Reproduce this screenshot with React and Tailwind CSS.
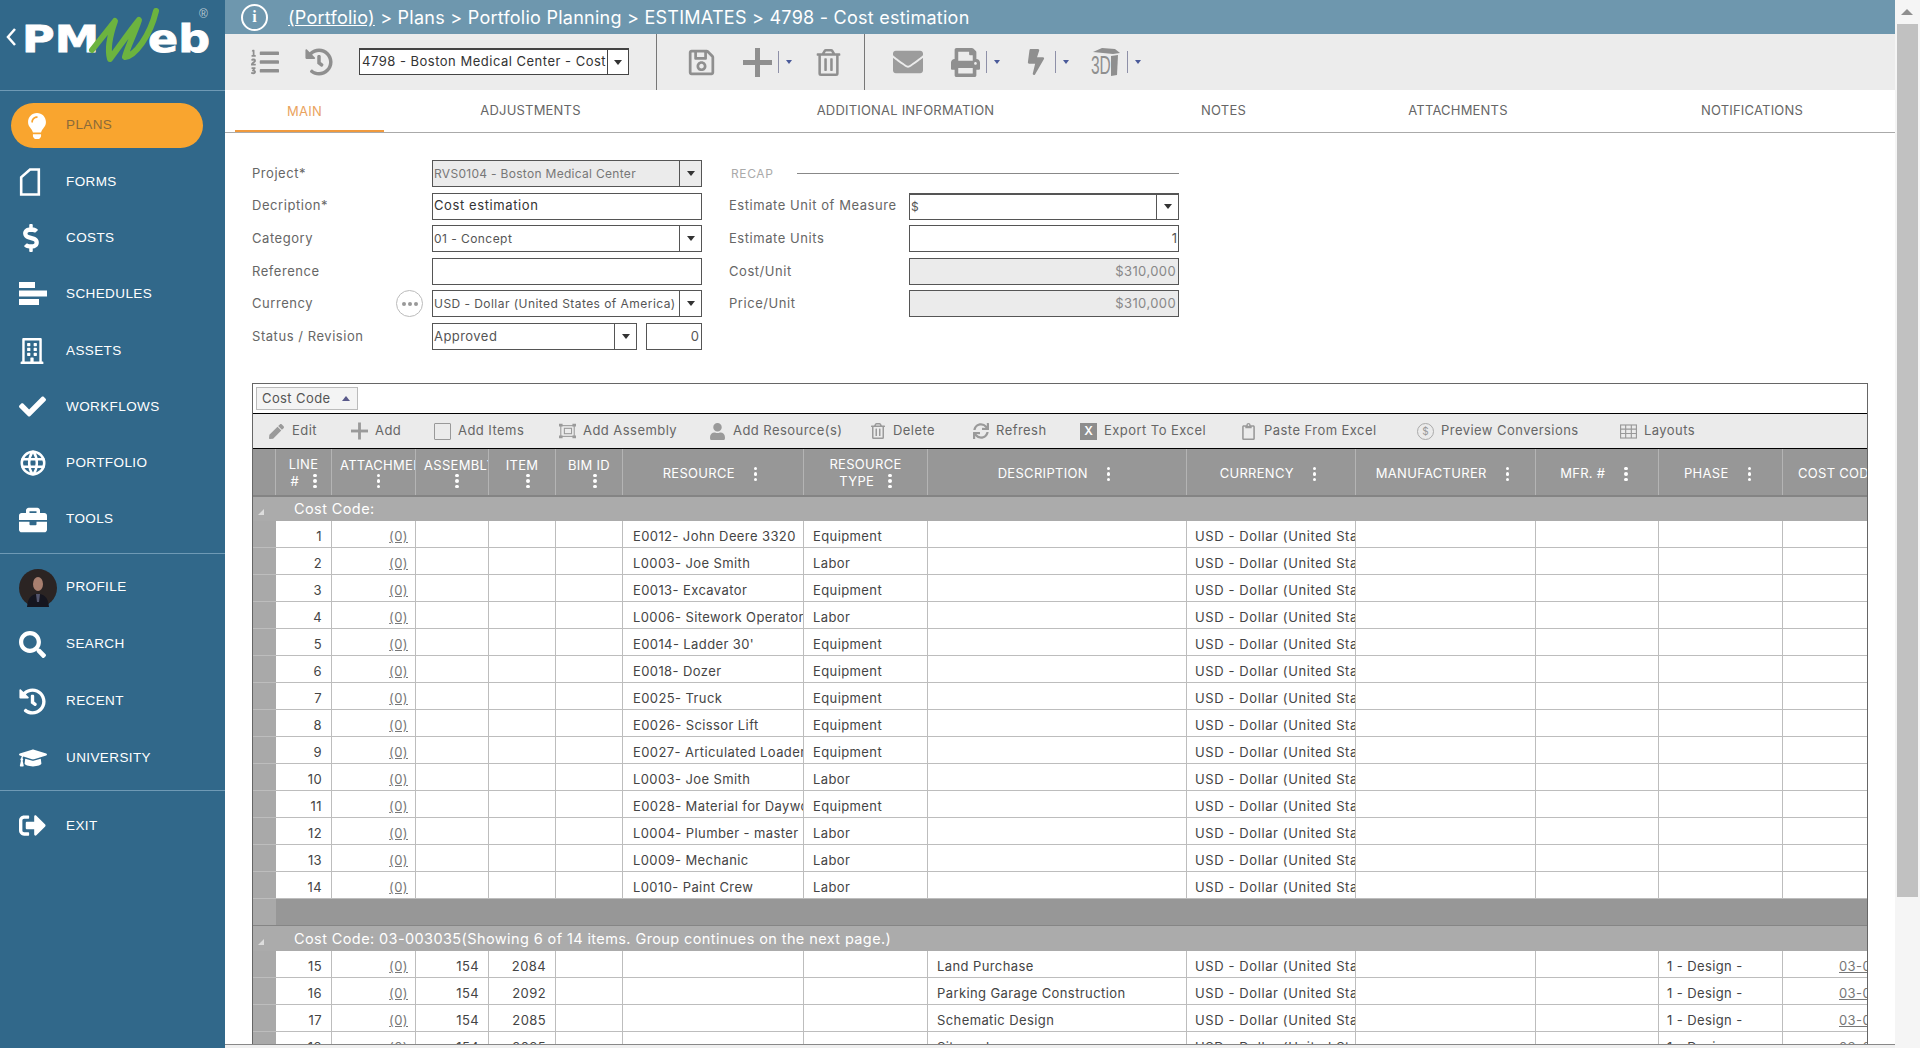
import {
  FaLightbulb, FaDollarSign, FaRegBuilding, FaCheck, FaBriefcase, FaSearch, FaHistory,
  FaGraduationCap, FaListOl, FaRegSave, FaRegTrashAlt, FaEnvelope, FaPrint, FaBolt,
  FaPen, FaUser, FaSync, FaRegClipboard, FaSignOutAlt,
} from "react-icons/fa";
import { TbWorld } from "react-icons/tb";

const font = "font-['Inter','Liberation_Sans',sans-serif]";

function Logo() {
  return (
    <svg width="225" height="90" viewBox="0 0 225 90" className="shrink-0">
      <path d="M15 29 L8 37 L15 45" fill="none" stroke="#fff" strokeWidth="2.5" />
      <text x="22" y="52" fill="#fff" stroke="#fff" strokeWidth="0.8" fontFamily="DejaVu Sans" fontWeight="700" fontSize="37" textLength="77" lengthAdjust="spacingAndGlyphs">PM</text>
      <text x="148" y="52" fill="#fff" stroke="#fff" strokeWidth="0.8" fontFamily="DejaVu Sans" fontWeight="700" fontSize="37" textLength="62" lengthAdjust="spacingAndGlyphs">eb</text>
      <path d="M92 50 C100 40 108 30 115 21 C110 35 107 48 110 59 C119 47 130 31 139 20 C134 35 127 48 125 57 C135 56 150 36 156 11" fill="none" stroke="#6cb33f" strokeWidth="6" strokeLinecap="round" strokeLinejoin="round" />
      <text x="199" y="18" fill="#b9c9d3" fontFamily="Liberation Sans" fontSize="12">®</text>
    </svg>
  );
}

function FormsIcon() {
  return (
    <svg width="22" height="28" viewBox="0 0 20 27" fill="none" stroke="#fff" strokeWidth="2.5">
      <path d="M1.5 25.5 V9 L10 1.5 H18.5 V25.5 Z" />
    </svg>
  );
}

function ScheduleIcon() {
  return (
    <svg width="28" height="24" viewBox="0 0 28 24" fill="#fff">
      <rect x="0" y="0" width="16" height="6" />
      <rect x="0" y="8.5" width="28" height="6" />
      <rect x="0" y="17" width="20" height="6" />
    </svg>
  );
}

function Avatar() {
  return (
    <svg width="38" height="38" viewBox="0 0 38 38">
      <circle cx="19" cy="19" r="19" fill="#2b2423" />
      <ellipse cx="19" cy="15" rx="5" ry="7" fill="#a87f6f" />
      <path d="M8 38 C9 27 14 25 19 25 C24 25 29 27 30 38 Z" fill="#15151f" />
      <path d="M17 25 L21 25 L20 33 L18 33 Z" fill="#54566e" />
    </svg>
  );
}

function NavItem({ icon, label, active }) {
  return (
    <div className={`flex items-center h-[45px] ml-[11px] w-[192px] rounded-full ${active ? "bg-[#f9a52f]" : ""}`}>
      <div className="w-[38px] ml-[8px] flex justify-start shrink-0">{icon}</div>
      <span className={`ml-[9px] text-[13.5px] tracking-[0.4px] font-['Liberation_Sans',sans-serif] ${active ? "text-[#8a6a3a]" : "text-white"}`}>{label}</span>
    </div>
  );
}

function Sidebar() {
  const iconCls = "text-white";
  return (
    <aside className="w-[225px] shrink-0 h-full bg-[#31688a] flex flex-col">
      <Logo />
      <div className="border-t border-[#6f9ab5]" />
      <div className="pt-[12px] flex flex-col gap-[11.3px]">
        <NavItem active label="PLANS" icon={<FaLightbulb size={26} className="text-white ml-[5px]" />} />
        <NavItem label="FORMS" icon={<FormsIcon />} />
        <NavItem label="COSTS" icon={<FaDollarSign size={28} className={`${iconCls} -ml-[2px]`} />} />
        <NavItem label="SCHEDULES" icon={<ScheduleIcon />} />
        <NavItem label="ASSETS" icon={<FaRegBuilding size={26} className={iconCls} />} />
        <NavItem label="WORKFLOWS" icon={<FaCheck size={27} className={iconCls} />} />
        <NavItem label="PORTFOLIO" icon={<TbWorld size={30} className={`${iconCls} -ml-[1px]`} />} />
        <NavItem label="TOOLS" icon={<FaBriefcase size={28} className={iconCls} />} />
      </div>
      <div className="border-t border-[#6f9ab5] mt-[11px]" />
      <div className="pt-[11px] flex flex-col gap-[11.8px]">
        <NavItem label="PROFILE" icon={<Avatar />} />
        <NavItem label="SEARCH" icon={<FaSearch size={27} className={iconCls} />} />
        <NavItem label="RECENT" icon={<FaHistory size={27} className={iconCls} />} />
        <NavItem label="UNIVERSITY" icon={<FaGraduationCap size={28} className={iconCls} />} />
      </div>
      <div className="border-t border-[#6f9ab5] mt-[10px]" />
      <div className="pt-[12px]">
        <NavItem label="EXIT" icon={<FaSignOutAlt size={27} className={iconCls} />} />
      </div>
    </aside>
  );
}

function Caret({ className = "" }) {
  return <span className={`inline-block w-0 h-0 border-l-[4px] border-r-[4px] border-t-[5px] border-l-transparent border-r-transparent border-t-[#333] ${className}`} />;
}

function BlueCaret() {
  return (
    <span className="flex items-center h-[26px] ml-[6px]">
      <span className="w-px h-[22px] bg-[#8e90a8]" />
      <span className="ml-[7px] w-0 h-0 border-l-[3px] border-r-[3px] border-t-[4px] border-l-transparent border-r-transparent border-t-[#4a5a9a]" />
    </span>
  );
}

function ToolIcon({ children, ml }) {
  return <div className={`flex items-center text-[#8f8f8f] ${ml}`}>{children}</div>;
}

function ThreeDIcon() {
  return (
    <div className="relative w-[30px] h-[30px]">
      <span className="absolute left-0 top-[6px] text-[25px] leading-[24px] font-['Liberation_Sans',sans-serif] text-[#8f8f8f] scale-x-[0.62] origin-left">3D</span>
      <svg className="absolute left-0 top-0" width="30" height="30" viewBox="0 0 30 30" fill="#8f8f8f">
        <path d="M2 5 L11 1 L24 2 L29 6 L22 7 Z" />
        <path d="M20 9 L27 8 L26 28 L20 29 Z" />
      </svg>
    </div>
  );
}

function Toolbar() {
  return (
    <div className="h-[56px] bg-[#ececec] flex items-stretch shrink-0">
      <ToolIcon ml="ml-[26px]"><FaListOl size={28} /></ToolIcon>
      <ToolIcon ml="ml-[26px]"><FaHistory size={28} /></ToolIcon>
      <div className="ml-[26px] mt-[14px] w-[270px] h-[27px] bg-white border border-[#444] border-t-2 flex items-center">
        <span className={`flex-1 pl-[2px] text-[13px] tracking-[0.5px] text-[#333] whitespace-nowrap overflow-hidden ${font}`}>4798 - Boston Medical Center - Cost</span>
        <span className="w-[21px] h-full border-l border-[#444] flex items-center justify-center"><Caret /></span>
      </div>
      <div className="ml-[27px] w-px bg-[#777]" />
      <ToolIcon ml="ml-[30px]"><FaRegSave size={29} /></ToolIcon>
      <ToolIcon ml="ml-[27px]">
        <svg width="29" height="29" viewBox="0 0 29 29" fill="#8f8f8f"><rect x="12" y="0" width="5" height="29" /><rect x="0" y="12" width="29" height="5" /></svg>
        <BlueCaret />
      </ToolIcon>
      <ToolIcon ml="ml-[23px]"><FaRegTrashAlt size={27} /></ToolIcon>
      <div className="ml-[22px] w-px bg-[#777]" />
      <ToolIcon ml="ml-[28px]"><FaEnvelope size={30} className="text-[#9c9c9c]" /></ToolIcon>
      <ToolIcon ml="ml-[28px]"><FaPrint size={29} /><BlueCaret /></ToolIcon>
      <ToolIcon ml="ml-[23px]"><FaBolt size={26} /><BlueCaret /></ToolIcon>
      <ToolIcon ml="ml-[22px]"><ThreeDIcon /><BlueCaret /></ToolIcon>
    </div>
  );
}

function Tabs() {
  const rest = [
    ["ADJUSTMENTS", "w-[293px]"],
    ["ADDITIONAL INFORMATION", "w-[457px]"],
    ["NOTES", "w-[179px]"],
    ["ATTACHMENTS", "w-[290px]"],
    ["NOTIFICATIONS", "w-[298px]"],
  ];
  return (
    <div className={`h-[43px] shrink-0 border-b border-[#aaa] flex pl-[10px] text-[13px] tracking-[0.2px] overflow-hidden ${font}`}>
      <div className="w-[149px] shrink-0 h-[43px] border-b-[3px] border-[#f09a3e] text-[#eaa35f] pr-[10px] flex items-center justify-center pt-[3px]">MAIN</div>
      {rest.map(([t, w]) => (
        <div key={t} className={`${w} shrink-0 flex items-center justify-center text-[#666]`}>{t}</div>
      ))}
    </div>
  );
}

function Field({ children, className = "", disabled }) {
  return <div className={`h-[27px] border border-[#555] flex items-center ${disabled ? "bg-[#ebebeb]" : "bg-white"} ${className}`}>{children}</div>;
}

function SelectBox({ text, color = "text-[#555]", disabled, size = "text-[12px] tracking-[0.45px]", className = "w-[270px]", thick }) {
  return (
    <Field disabled={disabled} className={`${className} ${thick ? "border-t-2" : ""}`}>
      <span className={`flex-1 pl-[1px] whitespace-nowrap overflow-hidden ${size} ${color}`}>{text}</span>
      <span className="w-[22px] shrink-0 h-full border-l border-[#555] flex items-center justify-center"><Caret /></span>
    </Field>
  );
}

function FormLabel({ children, w = "w-[180px]" }) {
  return <div className={`${w} shrink-0 text-[13px] tracking-[0.55px] text-[#666]`}>{children}</div>;
}

function MainForm() {
  return (
    <div className={`flex pl-[27px] pt-[27px] h-[250px] shrink-0 ${font}`}>
      <div className="flex flex-col gap-[5.6px] w-[450px] shrink-0">
        <div className="flex items-center">
          <FormLabel>Project*</FormLabel>
          <SelectBox disabled text="RVS0104 - Boston Medical Center" color="text-[#777]" size="text-[12px] tracking-[0.3px]" />
        </div>
        <div className="flex items-center">
          <FormLabel>Decription*</FormLabel>
          <Field className="w-[270px]"><span className="pl-[1px] text-[13px] tracking-[0.6px] text-[#333]">Cost estimation</span></Field>
        </div>
        <div className="flex items-center">
          <FormLabel>Category</FormLabel>
          <SelectBox text="01 - Concept" />
        </div>
        <div className="flex items-center">
          <FormLabel>Reference</FormLabel>
          <Field className="w-[270px]" />
        </div>
        <div className="flex items-center">
          <FormLabel w="w-[144px]">Currency</FormLabel>
          <div className="w-[27px] h-[27px] mr-[9px] rounded-full border border-[#bbb] flex items-center justify-center gap-[2px] shrink-0">
            <span className="w-[4px] h-[4px] rounded-full bg-[#999]" />
            <span className="w-[4px] h-[4px] rounded-full bg-[#999]" />
            <span className="w-[4px] h-[4px] rounded-full bg-[#999]" />
          </div>
          <SelectBox text="USD - Dollar (United States of America)" />
        </div>
        <div className="flex items-center">
          <FormLabel>Status / Revision</FormLabel>
          <SelectBox text="Approved" className="w-[205px]" size="text-[13px] tracking-[0.45px]" />
          <Field className="w-[56px] ml-[9px] justify-end"><span className="pr-[2px] text-[13px] text-[#555]">0</span></Field>
        </div>
      </div>
      <div className="flex flex-col gap-[5.6px] ml-[27px]">
        <div className="h-[27px] flex items-center pl-[2px]">
          <span className="text-[12px] tracking-[0.6px] text-[#aaa]">RECAP</span>
          <span className="ml-[24px] w-[382px] border-t border-[#888]" />
        </div>
        <div className="flex items-center">
          <FormLabel>Estimate Unit of Measure</FormLabel>
          <SelectBox thick text="$" />
        </div>
        <div className="flex items-center">
          <FormLabel>Estimate Units</FormLabel>
          <Field className="w-[270px] justify-end"><span className="pr-[1px] text-[13px] text-[#555]">1</span></Field>
        </div>
        <div className="flex items-center">
          <FormLabel>Cost/Unit</FormLabel>
          <Field disabled className="w-[270px] justify-end"><span className="pr-[2px] text-[13px] tracking-[0.4px] text-[#888]">$310,000</span></Field>
        </div>
        <div className="flex items-center">
          <FormLabel>Price/Unit</FormLabel>
          <Field disabled className="w-[270px] justify-end"><span className="pr-[2px] text-[13px] tracking-[0.4px] text-[#888]">$310,000</span></Field>
        </div>
      </div>
    </div>
  );
}

function GridAction({ icon, label, w }) {
  return (
    <div className={`${w} flex items-center shrink-0 text-[#666]`}>
      <span className="w-[17px] flex justify-center shrink-0 text-[#9a9a9a]">{icon}</span>
      <span className="ml-[7px] text-[13px] tracking-[0.45px] whitespace-nowrap">{label}</span>
    </div>
  );
}

function AssemblyIcon() {
  return (
    <svg width="19" height="16" viewBox="0 0 19 16" fill="none" stroke="#9a9a9a" strokeWidth="1.2">
      <rect x="2" y="2" width="15" height="12" />
      <rect x="6" y="5" width="8" height="6" />
      <path d="M0 0h4v3H0zM15 0h4v3h-4zM0 13h4v3H0zM15 13h4v3h-4z" fill="#9a9a9a" stroke="none" />
    </svg>
  );
}

function ExcelIcon() {
  return <span className="w-[17px] h-[17px] bg-[#8d8d8d] text-white text-[12px] font-semibold flex items-center justify-center">X</span>;
}

function CircleDollar() {
  return <span className="w-[17px] h-[17px] rounded-full border border-[#aaa] text-[#999] text-[10px] flex items-center justify-center">$</span>;
}

function TableIcon() {
  return (
    <svg width="18" height="15" viewBox="0 0 18 15" fill="none" stroke="#999" strokeWidth="1.2">
      <rect x="0.6" y="0.6" width="16.8" height="13.8" />
      <path d="M0.6 5h16.8M0.6 9.6h16.8M6 0.6v13.8M12 0.6v13.8" />
    </svg>
  );
}

const columns = [
  { w: "w-[56px]", title: ["LINE", "#"] },
  { w: "w-[84px]", title: ["ATTACHMENTS"], clip: true },
  { w: "w-[73px]", title: ["ASSEMBLY"], clip: true },
  { w: "w-[67px]", title: ["ITEM"], stack: true },
  { w: "w-[67px]", title: ["BIM ID"], stack: true },
  { w: "w-[181px]", title: ["RESOURCE"] },
  { w: "w-[124px]", title: ["RESOURCE", "TYPE"] },
  { w: "w-[259px]", title: ["DESCRIPTION"] },
  { w: "w-[169px]", title: ["CURRENCY"] },
  { w: "w-[180px]", title: ["MANUFACTURER"] },
  { w: "w-[123px]", title: ["MFR. #"] },
  { w: "w-[124px]", title: ["PHASE"] },
  { w: "w-[84px]", title: ["COST CODE"], noDots: true, left: true },
];

const firstGroup = [
  ["1", "E0012- John Deere 3320", "Equipment"],
  ["2", "L0003- Joe Smith", "Labor"],
  ["3", "E0013- Excavator", "Equipment"],
  ["4", "L0006- Sitework Operator", "Labor"],
  ["5", "E0014- Ladder 30'", "Equipment"],
  ["6", "E0018- Dozer", "Equipment"],
  ["7", "E0025- Truck", "Equipment"],
  ["8", "E0026- Scissor Lift", "Equipment"],
  ["9", "E0027- Articulated Loader", "Equipment"],
  ["10", "L0003- Joe Smith", "Labor"],
  ["11", "E0028- Material for Daywork", "Equipment"],
  ["12", "L0004- Plumber - master", "Labor"],
  ["13", "L0009- Mechanic", "Labor"],
  ["14", "L0010- Paint Crew", "Labor"],
];

const secondGroup = [
  ["15", "2084", "Land Purchase"],
  ["16", "2092", "Parking Garage Construction"],
  ["17", "2085", "Schematic Design"],
  ["18", "2085", "Sitework"],
];

function Dots({ className = "" }) {
  return (
    <span className={`inline-flex flex-col gap-[2px] items-center ${className}`}>
      <span className="w-[3.5px] h-[3.5px] rounded-full bg-white" />
      <span className="w-[3.5px] h-[3.5px] rounded-full bg-white" />
      <span className="w-[3.5px] h-[3.5px] rounded-full bg-white" />
    </span>
  );
}

function HeaderCell({ col }) {
  const { w, title, clip, stack, noDots, left } = col;
  if (clip) {
    return (
      <div className={`${w} shrink-0 border-r border-[#b4b4b4] flex flex-col justify-center overflow-hidden pt-[1px]`}>
        <span className="leading-[17px] pl-[8px] whitespace-nowrap overflow-hidden">{title[0]}</span>
        <Dots className="ml-[10px] self-center" />
      </div>
    );
  }
  if (stack) {
    return (
      <div className={`${w} shrink-0 border-r border-[#b4b4b4] flex flex-col items-center justify-center overflow-hidden pt-[1px]`}>
        <span className="leading-[17px] whitespace-nowrap">{title[0]}</span>
        <Dots className="ml-[12px]" />
      </div>
    );
  }
  if (title.length === 2) {
    return (
      <div className={`${w} shrink-0 border-r border-[#b4b4b4] flex flex-col items-center justify-center pt-[1px]`}>
        <span className="leading-[17px]">{title[0]}</span>
        <span className="leading-[17px] flex items-center gap-[14px]">{title[1]} <Dots /></span>
      </div>
    );
  }
  return (
    <div className={`${w} shrink-0 pt-[4px] ${noDots ? "" : "border-r border-[#b4b4b4] pr-[6px]"} flex items-center ${left ? "pl-[15px]" : "justify-center gap-[19px]"} overflow-hidden whitespace-nowrap`}>
      <span>{title[0]}</span>
      {!noDots && <Dots />}
    </div>
  );
}

function Cell({ w, children, right, last, extra = "pl-[8px]" }) {
  return (
    <div className={`${w} shrink-0 h-full pt-[6px] ${last ? "" : "border-r border-[#bdbdbd]"} flex items-center overflow-hidden whitespace-nowrap ${right ? "justify-end pr-[9px]" : extra}`}>
      {children}
    </div>
  );
}

function Row({ line, assembly, item, resource, type, description, phase, code }) {
  const w = columns.map((c) => c.w);
  return (
    <div className="h-[27px] flex border-b border-[#bdbdbd] shrink-0 text-[13px] tracking-[0.4px] text-[#444] bg-white">
      <div className="w-[23px] h-full bg-[#a9a9a9] shrink-0" />
      <Cell w={w[0]} right>{line}</Cell>
      <div className={`${w[1]} shrink-0 h-full pt-[6px] border-r border-[#bdbdbd] flex items-center justify-end pr-[7px]`}>
        <span className="underline text-[#777]">(0)</span>
      </div>
      <Cell w={w[2]} right>{assembly}</Cell>
      <Cell w={w[3]} right>{item}</Cell>
      <Cell w={w[4]} />
      <Cell w={w[5]} extra="pl-[10px]">{resource}</Cell>
      <Cell w={w[6]} extra="pl-[9px]">{type}</Cell>
      <Cell w={w[7]} extra="pl-[9px]">{description}</Cell>
      <Cell w={w[8]}><span className="tracking-[0.6px]">USD - Dollar (United States of America)</span></Cell>
      <Cell w={w[9]} />
      <Cell w={w[10]} />
      <Cell w={w[11]}>{phase}</Cell>
      <Cell w={w[12]} last extra="pl-[56px]">{code && <span className="underline text-[#777]">03-003035</span>}</Cell>
    </div>
  );
}

function GroupRow({ text, h }) {
  return (
    <div className={`${h} shrink-0 bg-[#ababab] flex items-center text-white text-[14.5px] tracking-[0.4px]`}>
      <div className="w-[23px] flex pl-[5px]">
        <span className="mt-[6px] w-0 h-0 border-b-[6px] border-l-[6px] border-b-[#ddd] border-l-transparent" />
      </div>
      <span className="ml-[18px]">{text}</span>
    </div>
  );
}

function DataGrid() {
  return (
    <div className={`ml-[27px] w-[1616px] border border-[#666] border-b-0 flex flex-col h-[661px] overflow-hidden shrink-0 ${font}`}>
      <div className="h-[30px] shrink-0 bg-white border-b border-black flex items-center pl-[3px]">
        <div className="h-[23px] w-[102px] bg-[#f4f4f4] border border-[#bbb] flex items-center pl-[5px] text-[13px] tracking-[0.4px] text-[#555]">
          Cost Code
          <span className="ml-[11px] w-0 h-0 border-l-[4px] border-r-[4px] border-b-[5px] border-l-transparent border-r-transparent border-b-[#5a5a8a]" />
        </div>
      </div>
      <div className="h-[35px] shrink-0 bg-[#ebebeb] border-b border-black flex items-center pl-[15px]">
        <GridAction w="w-[83px]" icon={<FaPen size={15} />} label="Edit" />
        <GridAction w="w-[83px]" icon={<svg width="18" height="18" viewBox="0 0 18 18" fill="#9a9a9a"><rect x="7.5" y="0" width="3" height="18" /><rect x="0" y="7.5" width="18" height="3" /></svg>} label="Add" />
        <GridAction w="w-[125px]" icon={<span className="w-[17px] h-[17px] border border-[#999] rounded-[1px]" />} label="Add Items" />
        <GridAction w="w-[150px]" icon={<AssemblyIcon />} label="Add Assembly" />
        <GridAction w="w-[160px]" icon={<FaUser size={17} />} label="Add Resource(s)" />
        <GridAction w="w-[103px]" icon={<FaRegTrashAlt size={16} />} label="Delete" />
        <GridAction w="w-[108px]" icon={<FaSync size={16} />} label="Refresh" />
        <GridAction w="w-[160px]" icon={<ExcelIcon />} label="Export To Excel" />
        <GridAction w="w-[177px]" icon={<FaRegClipboard size={17} />} label="Paste From Excel" />
        <GridAction w="w-[203px]" icon={<CircleDollar />} label="Preview Conversions" />
        <GridAction w="w-[100px]" icon={<TableIcon />} label="Layouts" />
      </div>
      <div className="h-[48px] shrink-0 bg-[#979797] border-b-[2px] border-[#848484] flex text-white text-[13px] tracking-[0.3px]">
        <div className="w-[23px] shrink-0 border-r border-[#b4b4b4]" />
        {columns.map((c) => <HeaderCell key={c.title[0] + c.w} col={c} />)}
      </div>
      <GroupRow text="Cost Code:" h="h-[24px]" />
      {firstGroup.map(([line, resource, type]) => (
        <Row key={line} line={line} resource={resource} type={type} />
      ))}
      <div className="h-[27px] shrink-0 flex bg-[#979797] border-b border-[#858585]">
        <div className="w-[23px] bg-[#a9a9a9]" />
      </div>
      <GroupRow text="Cost Code: 03-003035(Showing 6 of 14 items. Group continues on the next page.)" h="h-[25px]" />
      {secondGroup.map(([line, item, description]) => (
        <Row key={line} line={line} assembly="154" item={item} description={description} phase="1 - Design -" code />
      ))}
    </div>
  );
}

export default function App() {
  return (
    <div className="w-screen h-screen overflow-hidden flex bg-white">
      <Sidebar />
      <div className="flex-1 flex flex-col min-w-0 h-full">
        <div className="flex-1 min-h-0 flex flex-col overflow-hidden">
          <div className={`h-[34px] shrink-0 bg-[#6e97ae] flex items-center pl-[16px] text-white text-[18px] tracking-[0.25px] ${font}`}>
            <span className="w-[27px] h-[27px] rounded-full border-[2.5px] border-white flex items-center justify-center text-[16px] font-semibold font-['Liberation_Serif',serif]">i</span>
            <span className="ml-[20px] underline">(Portfolio)</span>
            <span>&nbsp;&gt; Plans &gt; Portfolio Planning &gt; ESTIMATES &gt; 4798 - Cost estimation</span>
          </div>
          <Toolbar />
          <Tabs />
          <MainForm />
          <DataGrid />
        </div>
        <div className="h-[4px] shrink-0 bg-[#f0f0f0] border-t border-[#888]" />
      </div>
      <div className="w-[25px] shrink-0 h-full bg-[#f5f5f5] pl-[2px]">
        <div className="h-[24px] flex items-center justify-center pr-[3px]">
          <span className="w-0 h-0 border-l-[6px] border-r-[6px] border-b-[6px] border-l-transparent border-r-transparent border-b-[#8f8f8f]" />
        </div>
        <div className="w-[21px] h-[873px] bg-[#c1c1c1]" />
      </div>
    </div>
  );
}
